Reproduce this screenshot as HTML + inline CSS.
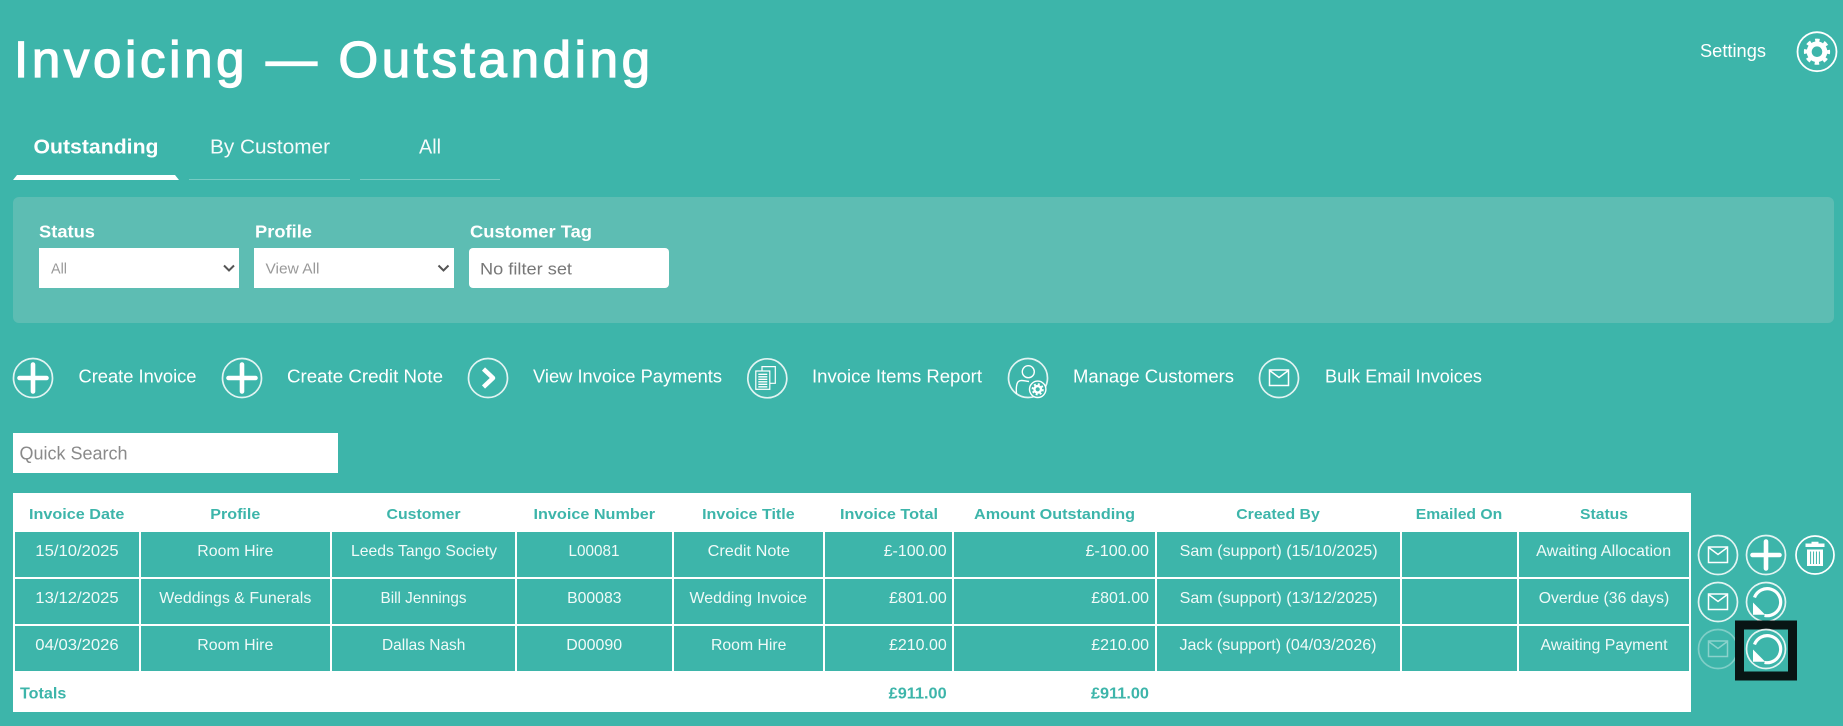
<!DOCTYPE html>
<html lang="en"><head><meta charset="utf-8"><title>Invoicing — Outstanding</title>
<style>
html,body{margin:0;padding:0;width:1843px;height:726px;overflow:hidden;background:#3db5aa}
svg{display:block}
text{font-family:"Liberation Sans",sans-serif;white-space:pre}
.w{fill:#fff}
.c{fill:#f0faf8;font-size:16px;text-anchor:middle}
.r{fill:#f0faf8;font-size:16px;text-anchor:end}
.h{fill:#3db5aa;font-size:15px;font-weight:bold;text-anchor:middle}
.t{fill:#3db5aa;font-size:15.5px;font-weight:bold;text-anchor:end}
.a{fill:#fff;font-size:18.5px}
.l{fill:#fff;font-size:17.5px;font-weight:bold}
.ring{fill:none;stroke:#fff;stroke-width:1.7;stroke-opacity:.85}
</style></head>
<body>
<svg width="1843" height="726" viewBox="0 0 1843 726" xmlns="http://www.w3.org/2000/svg">
<defs>
<g id="plus"><circle class="ring" r="19.5"/><path d="M-13.500 0H13.500M0-13.500V13.500" stroke="#fff" stroke-width="4.600" stroke-linecap="round" fill="none"/></g>
<g id="mail"><circle class="ring" r="19.5"/><path d="M-9.500-8H9.500V7.500H-9.500ZM-8.700-7 0-.5 8.700-7" fill="none" stroke="#fff" stroke-width="1.500"/></g>
<g id="redo"><circle class="ring" r="19.5"/><path d="M-11.500-4.500A13.500 13.500 0 1 1-1.500 13.400" fill="none" stroke="#fff" stroke-width="3.200"/><path d="M-13 .5V12.800H-.8Z" fill="#fff"/></g>
</defs>

<rect width="1843" height="726" fill="#3db5aa"/>

<!-- Title -->
<text x="14" y="77" font-size="51" class="w" stroke="#fff" stroke-width="1.300" textLength="636">Invoicing — Outstanding</text>
<text x="1700" y="57" font-size="18.500" class="w" lengthAdjust="spacingAndGlyphs" textLength="66">Settings</text>
<g transform="translate(1817 51.700)"><circle r="19.500" fill="none" stroke="#fff" stroke-width="1.800"/><circle r="7.800" fill="none" stroke="#fff" stroke-width="5"/><circle r="11.500" fill="none" stroke="#fff" stroke-width="3.200" stroke-dasharray="4.500 4.530" stroke-dashoffset="2.250"/></g>

<!-- Tabs -->
<text x="33.500" y="153.500" font-size="20" font-weight="bold" class="w" lengthAdjust="spacingAndGlyphs" textLength="125">Outstanding</text>
<text x="210" y="153.500" font-size="20" class="w" fill-opacity=".95" lengthAdjust="spacingAndGlyphs" textLength="120">By Customer</text>
<text x="419" y="153.500" font-size="20" class="w" fill-opacity=".95" lengthAdjust="spacingAndGlyphs" textLength="22">All</text>
<path d="M13 180 17 175H175L179 180Z" fill="#fff"/>
<rect x="189" y="179" width="161" height="1" fill="#fff" fill-opacity=".3"/>
<rect x="360" y="179" width="140" height="1" fill="#fff" fill-opacity=".3"/>

<!-- Filter panel -->
<rect x="13" y="197" width="1821" height="126" rx="6" fill="#5dbdb3"/>
<text x="39" y="237.500" class="l" lengthAdjust="spacingAndGlyphs" textLength="56">Status</text>
<text x="255" y="237.500" class="l" lengthAdjust="spacingAndGlyphs" textLength="57">Profile</text>
<text x="470" y="237.500" class="l" lengthAdjust="spacingAndGlyphs" textLength="122">Customer Tag</text>
<rect x="39" y="248" width="200" height="40" fill="#fff"/>
<rect x="254" y="248" width="200" height="40" fill="#fff"/>
<rect x="469" y="248" width="200" height="40" rx="4" fill="#fff"/>
<text x="51" y="273.500" font-size="15" fill="#999" lengthAdjust="spacingAndGlyphs" textLength="16">All</text>
<text x="265.500" y="273.500" font-size="15" fill="#999" lengthAdjust="spacingAndGlyphs" textLength="54">View All</text>
<text x="480" y="274.500" font-size="17" fill="#777" lengthAdjust="spacingAndGlyphs" textLength="92">No filter set</text>
<path d="M224 265.500 229 270.500 234 265.500M438.500 265.500 443.500 270.500 448.500 265.500" fill="none" stroke="#555" stroke-width="2"/>

<!-- Actions -->
<use href="#plus" x="33" y="378"/>
<text x="78.500" y="382.500" class="a" lengthAdjust="spacingAndGlyphs" textLength="118">Create Invoice</text>
<use href="#plus" x="242" y="378"/>
<text x="287" y="382.500" class="a" lengthAdjust="spacingAndGlyphs" textLength="156">Create Credit Note</text>
<g transform="translate(488 378)"><circle class="ring" r="19.5"/><path d="M-4.500-9 5 0-4.500 9" fill="none" stroke="#fff" stroke-width="4.500" stroke-linejoin="round"/></g>
<text x="533" y="382.500" class="a" lengthAdjust="spacingAndGlyphs" textLength="189">View Invoice Payments</text>
<g transform="translate(767.300 378.300)"><circle class="ring" r="19.5"/><path d="M-5.300-7V-11.700H8V5H2.700" fill="none" stroke="#fff" stroke-width="1.200"/><rect x="-11.500" y="-7.300" width="14" height="18.300" fill="none" stroke="#fff" stroke-width="1.200"/><path d="M-9-4H0M-9-1.500H0M-9 1H0M-9 3.500H0M-9 6H0M-9 8.500H0" stroke="#fff" stroke-width="1.400"/></g>
<text x="812" y="382.500" class="a" lengthAdjust="spacingAndGlyphs" textLength="170">Invoice Items Report</text>
<g transform="translate(1028 378)"><circle class="ring" r="19.500" stroke-opacity="1"/><circle cx=".3" cy="-6.300" r="6" fill="none" stroke="#fff" stroke-width="1.400"/><path d="M-11.500 16C-13-2-6 3 1 3.500" fill="none" stroke="#fff" stroke-width="1.400"/><circle cx="9.700" cy="11.300" r="8.200" fill="#3db5aa" stroke="#fff" stroke-width="1.400"/><circle cx="9.700" cy="11.300" r="3.300" fill="none" stroke="#fff" stroke-width="2.400"/><circle cx="9.700" cy="11.300" r="5.200" fill="none" stroke="#fff" stroke-width="1.800" stroke-dasharray="2 2.080"/></g>
<text x="1073" y="382.500" class="a" lengthAdjust="spacingAndGlyphs" textLength="161">Manage Customers</text>
<use href="#mail" x="1279" y="378"/>
<text x="1325" y="382.500" class="a" lengthAdjust="spacingAndGlyphs" textLength="157">Bulk Email Invoices</text>

<!-- Search -->
<rect x="13" y="433" width="325" height="40" fill="#fff"/>
<text x="19.500" y="459.500" font-size="18.500" fill="#8a8a8a" lengthAdjust="spacingAndGlyphs" textLength="108">Quick Search</text>

<!-- Table -->
<rect x="13" y="493" width="1678" height="219" fill="#fff"/>
<g fill="#3db5aa">
<rect x="15" y="532" width="124" height="45"/><rect x="141" y="532" width="189" height="45"/><rect x="332" y="532" width="183" height="45"/><rect x="517" y="532" width="155" height="45"/><rect x="674" y="532" width="149" height="45"/><rect x="825" y="532" width="127" height="45"/><rect x="954" y="532" width="201" height="45"/><rect x="1157" y="532" width="243" height="45"/><rect x="1402" y="532" width="115" height="45"/><rect x="1519" y="532" width="170" height="45"/>
<rect x="15" y="579" width="124" height="45"/><rect x="141" y="579" width="189" height="45"/><rect x="332" y="579" width="183" height="45"/><rect x="517" y="579" width="155" height="45"/><rect x="674" y="579" width="149" height="45"/><rect x="825" y="579" width="127" height="45"/><rect x="954" y="579" width="201" height="45"/><rect x="1157" y="579" width="243" height="45"/><rect x="1402" y="579" width="115" height="45"/><rect x="1519" y="579" width="170" height="45"/>
<rect x="15" y="626" width="124" height="45"/><rect x="141" y="626" width="189" height="45"/><rect x="332" y="626" width="183" height="45"/><rect x="517" y="626" width="155" height="45"/><rect x="674" y="626" width="149" height="45"/><rect x="825" y="626" width="127" height="45"/><rect x="954" y="626" width="201" height="45"/><rect x="1157" y="626" width="243" height="45"/><rect x="1402" y="626" width="115" height="45"/><rect x="1519" y="626" width="170" height="45"/>
</g>

<text class="h" x="76.700" y="519" lengthAdjust="spacingAndGlyphs" textLength="95.300">Invoice Date</text>
<text class="h" x="235.300" y="519" lengthAdjust="spacingAndGlyphs" textLength="50">Profile</text>
<text class="h" x="423.500" y="519" lengthAdjust="spacingAndGlyphs" textLength="74">Customer</text>
<text class="h" x="594.300" y="519" lengthAdjust="spacingAndGlyphs" textLength="121.600">Invoice Number</text>
<text class="h" x="748.400" y="519" lengthAdjust="spacingAndGlyphs" textLength="92.600">Invoice Title</text>
<text class="h" x="889" y="519" lengthAdjust="spacingAndGlyphs" textLength="98">Invoice Total</text>
<text class="h" x="1054.500" y="519" lengthAdjust="spacingAndGlyphs" textLength="161">Amount Outstanding</text>
<text class="h" x="1278" y="519" lengthAdjust="spacingAndGlyphs" textLength="83.500">Created By</text>
<text class="h" x="1459" y="519" lengthAdjust="spacingAndGlyphs" textLength="86.500">Emailed On</text>
<text class="h" x="1604" y="519" lengthAdjust="spacingAndGlyphs" textLength="48">Status</text>

<text class="c" x="77" y="556" lengthAdjust="spacingAndGlyphs" textLength="83.400">15/10/2025</text>
<text class="c" x="235.300" y="556" lengthAdjust="spacingAndGlyphs" textLength="76">Room Hire</text>
<text class="c" x="424" y="556" lengthAdjust="spacingAndGlyphs" textLength="146">Leeds Tango Society</text>
<text class="c" x="594" y="556" lengthAdjust="spacingAndGlyphs" textLength="51">L00081</text>
<text class="c" x="748.800" y="556" lengthAdjust="spacingAndGlyphs" textLength="82.300">Credit Note</text>
<text class="r" x="946.700" y="556" lengthAdjust="spacingAndGlyphs" textLength="63">£-100.00</text>
<text class="r" x="1149" y="556" lengthAdjust="spacingAndGlyphs" textLength="63.500">£-100.00</text>
<text class="c" x="1278.600" y="556" lengthAdjust="spacingAndGlyphs" textLength="198">Sam (support) (15/10/2025)</text>
<text class="c" x="1603.600" y="556" lengthAdjust="spacingAndGlyphs" textLength="135">Awaiting Allocation</text>

<text class="c" x="77" y="603" lengthAdjust="spacingAndGlyphs" textLength="83.400">13/12/2025</text>
<text class="c" x="235.300" y="603" lengthAdjust="spacingAndGlyphs" textLength="152">Weddings &amp; Funerals</text>
<text class="c" x="423.500" y="603" lengthAdjust="spacingAndGlyphs" textLength="86">Bill Jennings</text>
<text class="c" x="594.300" y="603" lengthAdjust="spacingAndGlyphs" textLength="54.400">B00083</text>
<text class="c" x="748.300" y="603" lengthAdjust="spacingAndGlyphs" textLength="117.500">Wedding Invoice</text>
<text class="r" x="946.700" y="603" lengthAdjust="spacingAndGlyphs" textLength="57.700">£801.00</text>
<text class="r" x="1149" y="603" lengthAdjust="spacingAndGlyphs" textLength="57.700">£801.00</text>
<text class="c" x="1278.600" y="603" lengthAdjust="spacingAndGlyphs" textLength="198">Sam (support) (13/12/2025)</text>
<text class="c" x="1604" y="603" lengthAdjust="spacingAndGlyphs" textLength="130.500">Overdue (36 days)</text>

<text class="c" x="77" y="650" lengthAdjust="spacingAndGlyphs" textLength="83.400">04/03/2026</text>
<text class="c" x="235.300" y="650" lengthAdjust="spacingAndGlyphs" textLength="76">Room Hire</text>
<text class="c" x="423.700" y="650" lengthAdjust="spacingAndGlyphs" textLength="83.400">Dallas Nash</text>
<text class="c" x="594.200" y="650" lengthAdjust="spacingAndGlyphs" textLength="55.800">D00090</text>
<text class="c" x="748.700" y="650" lengthAdjust="spacingAndGlyphs" textLength="75.400">Room Hire</text>
<text class="r" x="946.700" y="650" lengthAdjust="spacingAndGlyphs" textLength="57.700">£210.00</text>
<text class="r" x="1149" y="650" lengthAdjust="spacingAndGlyphs" textLength="57.700">£210.00</text>
<text class="c" x="1278" y="650" lengthAdjust="spacingAndGlyphs" textLength="197">Jack (support) (04/03/2026)</text>
<text class="c" x="1604" y="650" lengthAdjust="spacingAndGlyphs" textLength="127">Awaiting Payment</text>

<text x="20" y="698.500" font-size="15.500" font-weight="bold" fill="#3db5aa" lengthAdjust="spacingAndGlyphs" textLength="46.300">Totals</text>
<text class="t" x="946.700" y="698.500" lengthAdjust="spacingAndGlyphs" textLength="58">£911.00</text>
<text class="t" x="1149" y="698.500" lengthAdjust="spacingAndGlyphs" textLength="58">£911.00</text>

<!-- Row actions -->
<use href="#mail" x="1718" y="555"/>
<use href="#plus" x="1766" y="555"/>
<g transform="translate(1815 555)"><circle r="19" fill="none" stroke="#fff" stroke-width="1.700"/><path d="M-9.500-8H9.500V-11.500H3.500V-13.300H-3.500V-11.500H-9.500Z" fill="#fff"/><rect x="-8" y="-5.500" width="16" height="16.500" fill="#fff"/><path d="M-4.400-3.500V9M-1.450-3.500V9M1.450-3.500V9M4.400-3.500V9" stroke="#3db5aa" stroke-width="1"/></g>
<use href="#mail" x="1718" y="602"/>
<use href="#redo" x="1766" y="602"/>
<use href="#mail" x="1718" y="649" opacity=".4"/>
<rect x="1739.500" y="625" width="53" height="51" fill="none" stroke="#081514" stroke-width="9"/>
<use href="#redo" x="1766" y="649"/>
</svg>
</body></html>
